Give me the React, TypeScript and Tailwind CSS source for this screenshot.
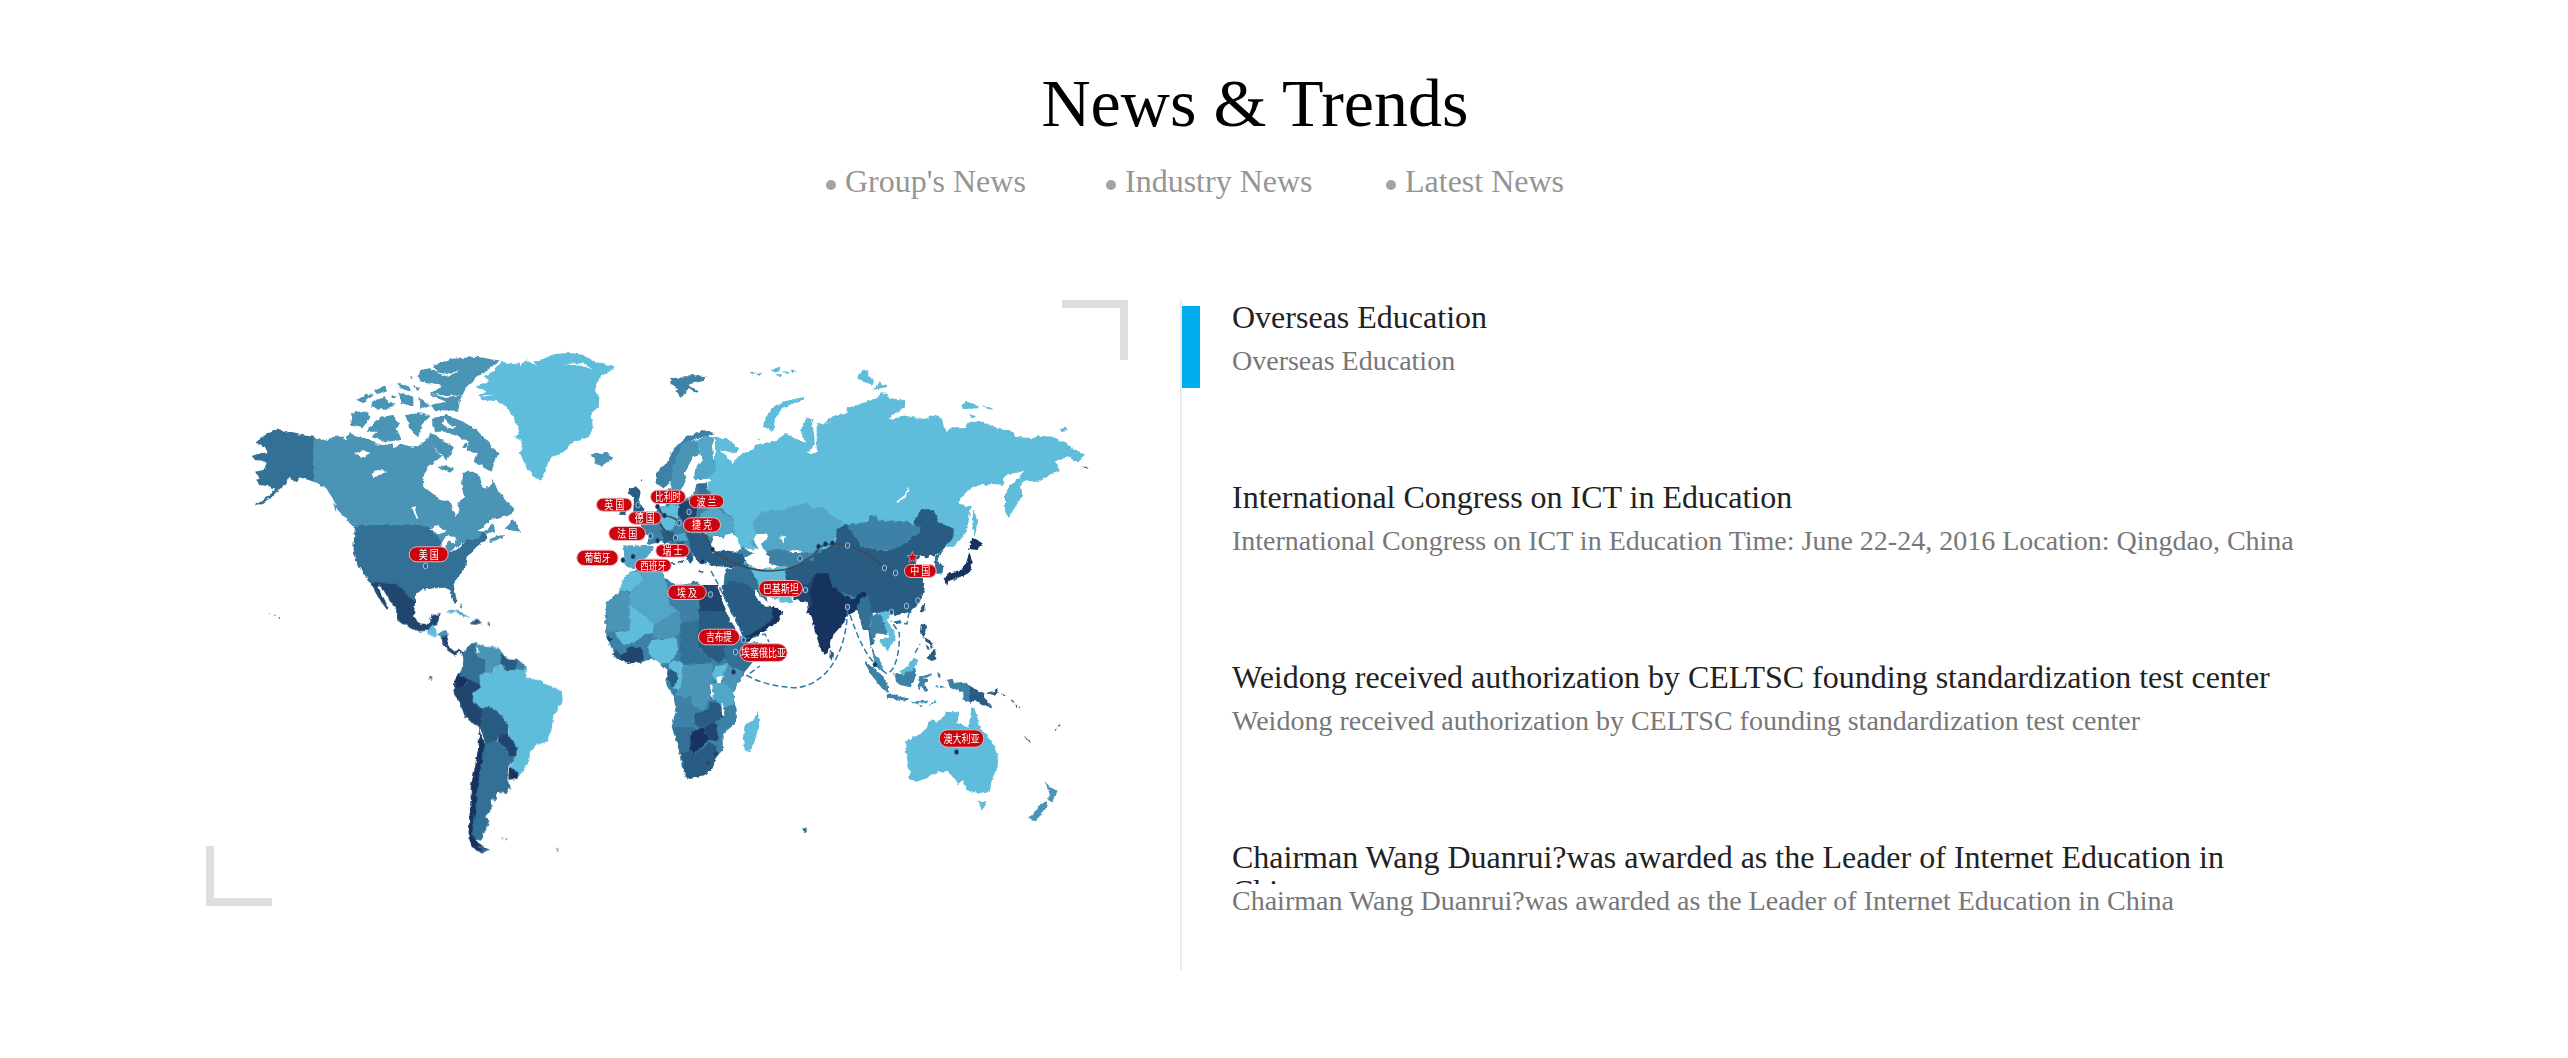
type Shape = [fill: string, d: string];

const LIGHT = '#5fbcdb';
const SKY = '#52a6c8';
const MID = '#4a94b6';
const STEEL = '#3d81a6';
const SLATE = '#327095';
const DARK = '#285c83';
const DEEP = '#20466f';
const NAVY = '#16335f';
const SEA = '#ffffff';

const northAmerica: Shape[] = [
  [SLATE, 'M165 458L190 440 205 425 235 417 270 428 310 436 342 440 342 575 300 562 285 575 265 560 255 585 235 600 215 622 190 638 160 652 190 628 215 612 225 595 200 588 175 585 165 572 180 565 165 545 190 540 200 520 190 512 165 510 155 498 185 488 200 490 195 470Z'],
  [MID, 'M340 440L380 452 400 440 430 440 450 430 470 440 500 445 530 460 560 462 600 460 640 465 665 460 685 440 700 470 725 500 690 525 668 560 670 590 700 612 720 630 750 635 757 660 770 677 778 660 775 640 792 620 785 590 790 545 820 545 840 560 850 592 868 592 880 570 895 605 920 635 942 655 935 672 900 685 870 690 835 722 855 725 880 700 885 722 855 735 840 755 770 780 730 785 700 730 660 708 470 708 450 690 430 680 410 655 395 620 375 590 340 575Z'],
  [SLATE, 'M465 705H660L690 715 720 750 725 780 750 785 800 750 835 745 855 722 862 745 830 770 800 800 795 835 760 880 770 930 762 942 750 900 735 893 700 895 665 900 645 915 645 938 625 930 605 900 585 886 560 884 510 877 490 850 465 815 460 770Z'],
  [SEA, 'M688 718L715 705 740 725 720 733ZM722 755L745 735 770 747 765 762 750 750 740 765 738 788 722 775ZM748 785L765 775 796 755 775 778ZM635 650L643 650 655 685 650 686ZM515 552L532 540 562 542 535 558 520 562ZM462 492L490 480 508 490 485 505 475 495Z'],
  [SEA, 'M725 528L740 540 755 520 760 545 735 552ZM430 447L436 430 441 448ZM520 462L560 466 575 455 580 472 600 462 640 470 665 462 660 455 600 455 560 456Z'],
  [MID, 'M868 750L890 738 918 735 890 750 870 758ZM912 718L930 700 935 682 945 700 962 725 940 722ZM400 640L410 650 407 665ZM435 683L455 690 475 715 460 708Z'],
  [MID, 'M700 225L750 207 830 200 902 212 870 235 830 262 800 290 780 330 775 362 700 360 690 345 740 335 700 320 690 310 720 295 700 285 665 275 655 262 662 240 690 235 715 245Z'],
  [SEA, 'M705 246L740 252 778 240 745 260ZM690 310L740 318 785 316 740 324ZM690 278L725 284 715 300Z'],
  [MID, 'M470 330L500 312 518 315 490 340ZM522 300L555 290 562 300 535 312ZM512 332L535 328 555 322 562 335 585 338 582 352 550 360 515 352ZM590 280L630 290 632 305 600 295ZM595 305L640 320 640 350 605 340ZM655 320L690 345 665 355ZM640 285L660 292 655 302ZM575 315L590 320 580 326ZM630 262L638 262 636 270Z'],
  [MID, 'M455 370L490 362 512 380 500 400 485 415 450 405ZM510 410L545 380 580 375 600 400 590 415 605 450 560 455 515 440 530 425 500 425ZM615 375L655 370 690 375 665 405 655 442 640 430 625 400Z'],
  [MID, 'M695 385L740 375 790 395 830 420 860 450 880 475 900 490 885 510 875 545 850 530 820 515 830 490 800 480 805 455 775 440 740 425 705 425ZM690 425L720 445 760 470 750 495 740 512 720 490 685 455Z'],
  [SEA, 'M735 385L725 400 745 415 770 410 750 405 740 395ZM795 455L808 466 795 480 782 466Z'],
  [MID, 'M790 462L802 462 802 474 790 474ZM715 532L740 525 765 535 750 548Z'],
  [LIGHT, 'M905 215L940 222 980 212 1020 210 1060 193 1110 188 1150 195 1180 212 1245 230 1240 238 1200 260 1185 300 1198 320 1196 350 1175 370 1178 410 1168 440 1110 462 1090 490 1055 500 1040 530 1025 573 1000 560 980 535 960 490 968 455 945 440 960 430 940 380 920 350 890 333 845 330 835 315 862 305 825 290 872 275 850 262 885 240Z'],
  [SEA, 'M958 215L962 232 967 214ZM985 210L1012 228 1000 210ZM1090 222L1150 220 1180 240 1150 228ZM850 316L880 314 850 320Z'],
  [MID, 'M1165 490L1200 488 1225 490 1237 505 1205 528 1180 518 1185 505Z'],
  [SLATE, 'M208 966h5v4h-5ZM222 974h4v3h-4ZM235 982h5v4h-5ZM780 940l5 12-4-2Z'],
];

const southAmerica: Shape[] = [
  [DEEP, 'M-30 -55L20 -50 45 -48 65 -35 85 -10 105 5 102 45 115 70 145 72 155 45 182 42 172 70 150 92 115 94 85 82 50 57 52 32 30 5 10 -30 -2 -45 -8 -42 8 -12 25 20 22 30 5 8 -15 -28Z'],
  [LIGHT, 'M142 92L160 75 170 90 166 110 150 108Z'],
  [MID, 'M168 100L200 92 207 105 195 118 180 114Z'],
  [DEEP, 'M183 112L206 105 200 135 225 156 236 146 250 158 246 168 236 154 224 166 198 148 190 132Z'],
  [SKY, 'M198 38L215 28 240 35 268 54 250 52 228 36Z'],
  [DARK, 'M275 65L290 56 310 68 290 73 272 73ZM320 70h10v5h-10ZM240 10l6 8-2 4ZM218 0l10 2-4 10ZM148 230h6v8h-5Z'],
  [SLATE, 'M247 160L265 138 290 125 285 150 300 175 316 175 316 215 302 230 302 256 265 245 233 225 245 205 250 180Z'],
  [MID, 'M288 128L310 140 355 142 372 165 367 190 342 205 337 221 315 219 315 175 300 175 284 150Z'],
  [SEA, 'M291 138L296 156 288 154Z'],
  [DARK, 'M363 160L385 178 412 180 402 213 375 216 364 190Z'],
  [STEEL, 'M410 178L432 192 438 208 400 213Z'],
  [LIGHT, 'M298 225L315 218 337 220 345 200 368 192 375 215 405 211 435 207 441 214 437 232 455 237 475 240 500 255 525 262 545 275 548 300 535 325 520 345 515 385 500 425 470 435 450 455 448 480 430 515 415 530 388 500 412 465 405 435 385 410 385 380 368 350 330 320 300 326 273 300 280 272 300 260Z'],
  [DEEP, 'M222 250L250 258 268 240 300 253 298 265 277 280 275 300 300 325 307 323 303 388 255 352 240 308 220 280Z'],
  [NAVY, 'M235 222L267 240 250 258 230 262 222 245Z'],
  [DARK, 'M305 325L330 318 368 350 385 380 383 407 357 405 350 427 315 430 302 385Z'],
  [DEEP, 'M357 403L383 403 410 440 410 468 385 467 380 445 353 425Z'],
  [SLATE, 'M313 428L350 422 380 445 385 465 411 468 385 500 382 540 392 560 380 580 352 578 350 600 332 600 335 625 316 650 328 672 310 700 303 722 270 715 280 650 295 520 310 440Z'],
  [NAVY, 'M387 500L415 517 412 536 385 539ZM298 383L307 420 315 430 307 470 297 530 290 580 285 640 276 700 290 725 330 752 305 760 275 738 265 710 268 650 272 600 272 560 287 490 296 430Z'],
  [SEA, 'M262 670L268 678 264 690Z'],
  [SLATE, 'M292 735L330 752 308 758Z'],
  [MID, 'M363 715L372 712 370 720ZM376 714L384 716 376 721ZM525 745L538 752 532 754Z'],
];

const eurasiaWest: Shape[] = [
  [LIGHT, 'M465 440L500 445 538 475 525 490 480 480 505 505 515 520 535 500 550 490 580 480 585 465 610 460 650 450 675 432 700 440 735 458 722 420 740 385 760 385 768 410 765 440 770 460 745 487 772 485 790 450 782 405 800 400 805 385 830 375 860 372 870 355 900 342 900 780 600 780 545 775 520 730 520 690 470 640 445 600 440 560 465 520Z'],
  [SEA, 'M755 390L768 400 775 440 785 450 800 455 800 470 785 460 775 465 768 488 740 488 765 465 762 430ZM790 395L830 405 800 408Z'],
  [LIGHT, 'M608 410L622 375 645 350 680 332 733 320 728 330 670 352 645 385 640 424ZM568 244L592 247 576 254ZM590 252L610 248 600 259ZM630 240L662 233 652 250ZM648 256L667 250 656 264ZM670 243L692 247 680 256ZM693 242L711 242 700 250ZM588 448l12 -2-3 6Z'],
  [STEEL, 'M330 265L375 262 390 255 440 258 430 272 400 280 385 285 420 305 405 308 385 292 365 324 350 305 355 295 332 285Z'],
  [STEEL, 'M290 545L320 520 345 470 380 440 430 420 465 430 440 438 410 445 375 460 350 510 340 570 310 595 290 580Z'],
  [MID, 'M370 458L412 448 422 495 400 502 375 545 378 568 362 610 345 617 330 590 342 520Z'],
  [SKY, 'M412 450L440 436 465 440 455 470 470 540 440 567 400 572 405 540 425 505Z'],
  [SEA, 'M402 498L418 493 427 508 402 545 405 572 450 566 455 575 412 584 400 610 380 625 362 622 383 590 372 555Z'],
  [DARK, 'M206 597L225 590 242 605 236 630 254 662 235 674 220 662 222 630 208 612ZM183 658L202 663 197 675 177 674ZM242 567l5 -2-2 8Z'],
  [STEEL, 'M245 700L300 650 360 640 400 610 415 580 440 580 445 600 470 640 522 690 522 735 460 745 455 780 430 822 390 790 370 755 345 768 300 755 265 765 262 735 240 722Z'],
  [STEEL, 'M328 595L350 600 345 640 318 650 315 625Z'],
  [DEEP, 'M355 645L400 625 412 655 405 690 370 694 355 680Z'],
  [LIGHT, 'M303 652L345 640 355 648 352 690 335 722 315 718 303 690Z'],
  [SKY, 'M412 690L432 660 470 650 524 692 522 725 495 745 470 735 455 745 430 735Z'],
  [SLATE, 'M415 582L440 580 444 640 418 640Z'],
  [DARK, 'M300 720L340 725 350 755 310 755ZM380 725L440 735 455 780 440 820 420 822 395 785ZM335 818l15 4-10 4ZM412 842l20 2-10 4Z'],
  [SKY, 'M347 735L375 728 385 750 360 755ZM190 765L285 768 262 800 235 835 195 832Z'],
  [DARK, 'M345 762L368 752 400 800 392 822 375 792ZM352 818L372 808 366 822Z'],
  [DARK, 'M432 795L480 778 550 790 560 830 500 832 450 826Z'],
  [STEEL, 'M505 762L545 770 580 790 560 800 520 785Z'],
  [SEA, 'M450 768L465 738 490 747 497 735 520 728 518 742 545 775 530 785 500 778 470 785Z'],
  [SKY, 'M575 700L605 665 670 660 740 638 765 660 810 650 845 700 855 735 820 765 760 795 700 780 630 800 600 785 570 760 590 740Z'],
  [SEA, 'M580 750L590 732 618 730 622 745 605 765 622 795 630 830 600 838 592 800 595 775ZM658 740L675 738 668 758ZM768 742L775 732 802 730 800 737 778 740Z'],
  [STEEL, 'M622 785L650 775 700 790 760 785 800 755 830 760 800 800 770 830 720 850 680 838 630 820Z'],
  [LIGHT, 'M548 812L595 838 680 830 676 880 700 935 660 938 620 915 590 895 560 860Z'],
  [DARK, 'M675 840L740 810 775 815 775 860 740 885 700 898 678 880Z'],
  [DEEP, 'M700 895L745 880 765 855 790 845 800 880 770 975 745 970 740 935 700 930Z'],
];

const africaAndIndia: Shape[] = [
  [SLATE, 'M435 30L500 10 530 60 565 125 510 90 430 85Z'],
  [DARK, 'M425 85L450 62 500 72 535 110 560 138 605 152 600 180 560 210 500 246 485 232 460 170 430 115Z'],
  [NAVY, 'M575 135L607 155 595 182 555 212 500 246 490 235 550 200 580 175Z'],
  [SEA, 'M528 85L545 120 580 125 600 112 590 135 560 140 540 128 525 105Z'],
  [NAVY, 'M700 60L712 38 745 40 755 75 790 105 820 120 850 97 862 110 835 150 805 165 790 190 760 225 742 280 733 284 720 262 705 215 695 170 678 155 695 135 690 95Z'],
  [DARK, 'M750 268L762 285 757 302 748 292Z'],
  [STEEL, 'M150 35L190 30 240 25 255 55 290 75 330 72 340 62 370 78 415 85 430 130 460 190 485 235 490 250 545 245 530 290 500 330 465 385 460 410 470 450 468 490 430 520 432 565 410 590 395 630 365 650 320 658 305 620 295 565 275 500 288 450 280 410 258 370 262 330 240 308 215 298 180 308 140 310 105 285 80 235 75 180 80 130 120 90 130 60Z'],
  [LIGHT, 'M130 60L150 35 182 38 190 60 150 95 118 92Z'],
  [SKY, 'M150 95L190 60 182 33 242 25 262 75 265 130 300 150 222 205 150 135Z'],
  [MID, 'M80 128L118 92 150 100 150 215 80 215Z'],
  [LIGHT, 'M148 133L220 190 222 215 190 225 160 250 130 255 105 220 150 212Z'],
  [MID, 'M222 195L300 147 302 210 285 235 215 235Z'],
  [STEEL, 'M262 72L300 80 325 70 360 80 360 190 300 158 268 130Z'],
  [SLATE, 'M302 190L358 180 358 250 320 290 298 280Z'],
  [DEEP, 'M370 75H415L430 130 440 155 358 155 358 85Z'],
  [DARK, 'M358 155H440L478 215 460 262 420 310 385 290 355 262Z'],
  [LIGHT, 'M215 240L290 233 295 272 270 310 240 310 215 295 203 262Z'],
  [DEEP, 'M125 285L145 262 182 264 190 300 145 312 118 300ZM78 225L95 238 88 250Z'],
  [DARK, 'M105 270L125 285 120 300 100 285Z'],
  [SLATE, 'M300 288L350 262 395 300 380 318 305 315ZM430 262L480 240 545 260 530 290 490 335 440 312Z'],
  [LIGHT, 'M262 318L285 300 308 315 315 345 298 390 278 385 290 345Z'],
  [DARK, 'M258 345L272 328 292 340 290 372 275 378Z'],
  [MID, 'M310 315L395 310 402 350 390 380 390 420 370 452 340 440 330 412 285 410 305 370Z'],
  [LIGHT, 'M405 320L440 312 450 340 410 365 398 350Z'],
  [MID, 'M440 312L490 335 462 400 425 365Z'],
  [SKY, 'M395 370L425 365 462 395 462 435 430 445 400 415Z'],
  [DARK, 'M345 460L385 450 390 425 418 430 430 470 400 492 360 502 345 495Z'],
  [SLATE, 'M278 500L345 503 333 560 330 580 300 585 290 540Z'],
  [NAVY, 'M333 512L370 505 385 540 365 560 340 583 330 572Z'],
  [DEEP, 'M372 505L398 488 414 495 412 540 385 540Z'],
  [DARK, 'M300 582L330 568 345 583 388 545 410 560 412 590 395 630 365 650 320 658Z'],
  [DEEP, 'M400 575h10v12h-8ZM378 605l12 -4 0 10-8 3Z'],
  [SEA, 'M410 352L428 345 424 368 412 368ZM390 375L397 378 402 418 394 405ZM424 432L430 434 433 468 427 466ZM413 82L422 95 485 215 480 230 450 180 440 155Z'],
  [LIGHT, 'M495 495L520 480 532 455 540 480 525 540 510 572 495 572 488 535Z'],
  [SLATE, 'M666 805h14v10h-11Z'],
];

const asiaEast: Shape[] = [
  [LIGHT, 'M-10 400L20 400 45 400 38 378 80 375 80 355 140 335 170 325 185 308 212 325 255 330 255 352 225 370 205 388 262 378 290 385 328 388 330 376 362 382 370 405 382 422 395 412 440 412 445 395 490 395 530 415 580 425 585 440 640 445 655 437 700 440 740 462 770 485 795 493 775 517 740 497 705 515 720 543 690 555 650 575 610 572 600 590 607 615 590 645 565 683 555 660 555 610 575 580 600 562 612 542 560 555 550 585 520 582 465 587 440 605 412 640 452 652 445 700 430 740 400 770 378 770 300 760 60 780 -10 780Z'],
  [LIGHT, 'M460 650L471 690 474 705 463 740 457 700ZM110 262L125 242 140 238 148 258 162 270 158 284 130 275ZM160 300L180 275 202 290ZM425 345L438 335 475 345 475 355 430 357ZM488 347L520 353 515 361ZM448 372L468 379 455 385ZM718 418L735 412 744 420 725 423ZM183 310L205 312 200 322Z'],
  [SEA, 'M228 635L255 615 263 590 268 600 255 625 235 638ZM552 560L590 555 575 580 552 585Z'],
  [SLATE, 'M785 530L800 530 806 537Z'],
  [SKY, 'M-30 660L5 650 40 680 70 695 50 740 0 780 -30 780Z'],
  [DARK, 'M-20 800L0 785 48 755 50 720 80 700 100 730 125 770 200 782 260 755 300 725 280 698 305 658 340 658 358 700 403 715 398 745 378 770 340 802 290 810 285 835 305 862 315 895 300 935 270 965 225 978 210 965 180 970 150 965 130 915 100 925 50 908 20 880 -10 850Z'],
  [STEEL, 'M80 705L145 695 150 675 170 678 175 692 230 692 270 697 300 715 300 728 262 755 240 770 200 782 130 772 100 735Z'],
  [SLATE, 'M345 802L372 775 362 795 352 812 370 832 367 850 350 852 345 830Z'],
  [SEA, 'M290 812L300 795 322 808 330 795 345 802 345 822 300 824Z'],
  [NAVY, 'M443 782L450 765 457 743 488 760 470 780 450 777ZM448 787L458 815 450 847 425 860 410 864 385 874 370 866 390 848 425 838 438 820ZM373 868L387 870 378 887ZM395 862l16 -2-8 10Z'],
  [STEEL, 'M20 865L50 905 110 920 90 945 50 925 18 895Z'],
  [NAVY, 'M98 930L122 905 140 912 128 940 115 962 95 955Z'],
  [DARK, 'M302 948L315 938 313 963 304 968Z'],
];

const southEast: Shape[] = [
  [SLATE, 'M108 75L128 50 145 45 150 70 158 95 150 130 160 190 152 205 145 150 128 150 118 110Z'],
  [STEEL, 'M148 110L185 95 205 130 202 165 170 160 160 185 155 200 165 235 182 262 152 215 158 190Z'],
  [LIGHT, 'M175 98L205 92 212 98 203 125 222 150 227 180 200 215 195 198 178 190 180 178 208 172 195 138Z'],
  [STEEL, 'M130 243L160 262 185 285 203 312 205 340 185 325 155 285ZM200 343L215 340 240 350 262 354 262 364 205 353Z'],
  [MID, 'M160 218L178 235 190 270 178 270 162 245ZM275 363L325 362 325 370 275 370ZM326 378L345 360 351 366ZM295 373L306 378 300 382Z'],
  [STEEL, 'M223 280L245 280 265 255 282 235 294 240 285 262 290 285 272 322 240 315 228 305Z'],
  [LIGHT, 'M240 272L262 258 282 235 294 240 284 262 268 275 250 285Z'],
  [STEEL, 'M298 290L335 280 334 289 310 294 322 298 320 306 312 310 322 330 315 336 303 317 298 332 293 315ZM352 275l9 8 0 12-7-4ZM344 319l14 2-14 4ZM359 317l17 3-15 5Z'],
  [DARK, 'M302 134L316 131 320 152 309 177 300 158ZM312 170L340 188 336 197 318 184ZM316 192L331 210 322 208ZM345 206L349 238 335 244 318 230 335 220ZM224 125l16 -6 6 7-16 7ZM330 194l9 8-6 5Z'],
  [STEEL, 'M380 300L395 296 403 310 425 306 452 318 455 370 430 360 430 340 400 325 385 318Z'],
  [DARK, 'M450 318L490 340 500 360 515 382 485 375 465 360 450 372ZM500 340L525 336 531 323 537 332 525 347ZM545 339l12 8-4 4ZM574 359l10 6-5 4ZM583 371l9 2-2 8ZM596 377l5 7-4 1ZM611 469L633 485 628 489Z'],
  [STEEL, 'M704 449l12 -8-6 12ZM717 433l6 3-6 4Z'],
  [LIGHT, 'M255 485L300 462 320 445 325 430 340 418 350 425 372 412 378 395 418 398 412 425 445 445 455 385 462 382 470 405 480 445 500 465 520 495 535 530 533 560 515 600 510 632 475 640 440 630 425 600 415 612 400 590 385 572 350 578 320 595 290 605 267 598 270 580 258 520Z'],
  [LIGHT, 'M475 662L485 668 498 662 496 682 486 692Z'],
  [MID, 'M674 602L690 622 713 632 696 667 684 660 689 640ZM681 664L680 682 662 706 645 724 627 714 648 690 664 668Z'],
];

const regions: { at: [number, number]; shapes: Shape[] }[] = [
  { at: [200, 290], shapes: northAmerica },
  { at: [380, 600], shapes: southAmerica },
  { at: [560, 290], shapes: eurasiaWest },
  { at: [820, 290], shapes: asiaEast },
  { at: [580, 560], shapes: africaAndIndia },
  { at: [820, 580], shapes: southEast },
];

// Label box: name, left, top, width, height, text length
const labels: [string, number, number, number, number, number][] = [
  ['英 国', 596, 497.7, 36.5, 14, 20],
  ['比利时', 650, 489.7, 36, 14.3, 26],
  ['波 兰', 688.7, 494.3, 35.6, 14, 20],
  ['德 国', 628, 511.3, 33.7, 13.4, 20],
  ['捷 克', 683, 517.3, 38, 15.3, 20],
  ['法 国', 608.3, 526, 37.7, 15, 20],
  ['瑞 士', 655.3, 544, 34.4, 13.6, 20],
  ['葡萄牙', 576.3, 549.7, 42.3, 16.3, 26],
  ['西班牙', 634.7, 558.7, 37, 13.6, 26],
  ['埃 及', 667.3, 584.7, 39.4, 15.3, 20],
  ['巴基斯坦', 758.3, 580, 44.7, 17, 36],
  ['吉布提', 698, 628.7, 42, 16.6, 26],
  ['埃塞俄比亚', 739.3, 643.3, 48.4, 18.7, 45],
  ['澳大利亚', 938.7, 729.3, 45.6, 18.4, 36],
  ['中 国', 904, 564, 32.7, 14, 20],
  ['美 国', 408.7, 546.3, 40, 16, 20],
];

const rings: [number, number][] = [
  [638, 505], [689, 512], [679, 523], [650.5, 536], [675.5, 538], [710.5, 594.5], [805.5, 590],
  [800, 558.5], [847.5, 545.5], [847.5, 607], [884.5, 568], [895.5, 573], [735.5, 652], [891.5, 612],
  [906.5, 606], [918, 600.5], [425.5, 566], [743.5, 640],
];
const dots: [number, number][] = [
  [657.5, 506.5], [664.5, 515.5], [657.5, 540.5], [633, 556.5], [623, 560], [712.5, 549.5], [702.5, 561.5],
  [818.5, 546.5], [825.5, 544], [832.5, 543], [733.5, 672], [875, 664.5], [956.5, 752],
];

function WorldMap() {
  return (
    <svg className="block h-full w-full" viewBox="206 300 922 606" fontFamily='"Noto Sans CJK SC", sans-serif'>
      <defs>
        <filter id="coast" x="200" y="300" width="930" height="606" filterUnits="userSpaceOnUse" colorInterpolationFilters="sRGB">
          <feTurbulence type="fractalNoise" baseFrequency="0.2" numOctaves="2" seed="4" result="n" />
          <feDisplacementMap in="SourceGraphic" in2="n" scale="4" xChannelSelector="R" yChannelSelector="G" result="d" />
          <feGaussianBlur in="d" stdDeviation="0.45" />
        </filter>
      </defs>
      <g filter="url(#coast)">
        {regions.map(({ at, shapes }, i) => (
          <g key={i} transform={`translate(${at[0]} ${at[1]}) scale(0.33333)`}>
            {shapes.map(([fill, d], j) => (
              <path key={j} d={d} fill={fill} />
            ))}
          </g>
        ))}
      </g>
      <g fill="none" strokeWidth="1.7" stroke="#3f4c55">
        <path d="M657 507L664 516Q673 516 679 522M660 524Q668 536 676 538M699 530Q708 537 712 550Q737 569 767 571Q795 571 805 560Q815 557 819 547Q832 541 848 546Q868 551 884 568L895 573" />
      </g>
      <g fill="none" strokeWidth="1.5" stroke="#2c7ba5" strokeDasharray="6 3.2">
        <path d="M847.7 610C845 670 814 686 797 687.7Q767 687 747 675.5L760 666M711 571L720 588 742 633M744 639L765 634 769 642M850 615C860 643 867 660 886.5 673.5C897 672 900 645 899.3 633L891 621M895 622L907 624 909 612M915 653L920 644" />
      </g>
      {rings.map(([x, y], i) => (
        <ellipse key={i} cx={x} cy={y} rx="2.2" ry="2.9" fill="#2a5b85" stroke="#a9cfe2" strokeWidth="0.9" />
      ))}
      {dots.map(([x, y], i) => (
        <ellipse key={i} cx={x} cy={y} rx="2.1" ry="2.5" fill="#173058" stroke="#3a6f9a" strokeWidth="0.6" />
      ))}
      {labels.map(([name, x, y, w, h, len]) => (
        <g key={name}>
          <rect x={x + 0.5} y={y + 0.5} width={w - 1} height={h - 1} rx={(h - 1) / 2} fill="#cb0510" stroke="#efb4b7" strokeWidth="1" />
          <text x={x + w / 2 - len / 2} y={y + h / 2 + 4.3} fontSize="11.5" fill="#fff" textLength={len} lengthAdjust="spacingAndGlyphs">
            {name}
          </text>
        </g>
      ))}
      <path d="M912.5 551.5l1.5 4h4l-3.1 2.6 1.2 4.2-3.6-2.5-3.6 2.5 1.2-4.2-3.1-2.6h4Z" fill="#cb0510" stroke="#e8a9ad" strokeWidth="0.7" />
    </svg>
  );
}

const tabs = ["Group's News", 'Industry News', 'Latest News'];

const news = [
  { title: 'Overseas Education', text: 'Overseas Education' },
  {
    title: 'International Congress on ICT in Education',
    text: 'International Congress on ICT in Education Time: June 22-24, 2016 Location: Qingdao, China',
  },
  {
    title: 'Weidong received authorization by CELTSC founding standardization test center',
    text: 'Weidong received authorization by CELTSC founding standardization test center',
  },
  {
    title: 'Chairman Wang Duanrui?was awarded as the Leader of Internet Education in China',
    text: 'Chairman Wang Duanrui?was awarded as the Leader of Internet Education in China',
  },
];

export default function App() {
  return (
    <main className="h-[1058px] w-[2568px] overflow-hidden bg-white pt-[63px] pl-[206px] font-['Liberation_Serif',serif]">
      <div className="w-[2098px]">
        <h1 className="text-center text-[68px] leading-[80px] text-black">News &amp; Trends</h1>
        <nav className="mt-[18px] flex pl-[620px]">
          {tabs.map((tab) => (
            <a key={tab} className="flex w-[280px] items-center text-[32px] leading-[40px] text-[#959595]">
              <span className="mt-[8px] mr-[9px] size-[10px] rounded-full bg-[#a5a2a3]" />
              {tab}
            </a>
          ))}
        </nav>
        <div className="mt-[99px] flex gap-[52px]">
          <div className="relative h-[606px] w-[922px]">
            <WorldMap />
            <span className="absolute top-0 right-0 h-[60px] w-[66px] border-t-8 border-r-8 border-[#dedede]" />
            <span className="absolute bottom-0 left-0 h-[60px] w-[66px] border-b-8 border-l-8 border-[#dedede]" />
          </div>
          <ul className="h-[670px] w-[1124px] border-l-2 border-[#ebebeb]">
            {news.map((item, i) => (
              <li key={item.title} className="flex h-[180px]">
                <span className={i === 0 ? 'mt-[6px] h-[82px] w-[18px] bg-[#00aeef]' : 'w-[18px]'} />
                <div className="ml-8 w-[1072px]">
                  <h2 className="h-[44px] overflow-hidden text-[32px] leading-[34px] text-[#222]">{item.title}</h2>
                  <p className="mt-px text-[28px] leading-[32px] whitespace-nowrap text-[#777]">{item.text}</p>
                </div>
              </li>
            ))}
          </ul>
        </div>
      </div>
    </main>
  );
}
